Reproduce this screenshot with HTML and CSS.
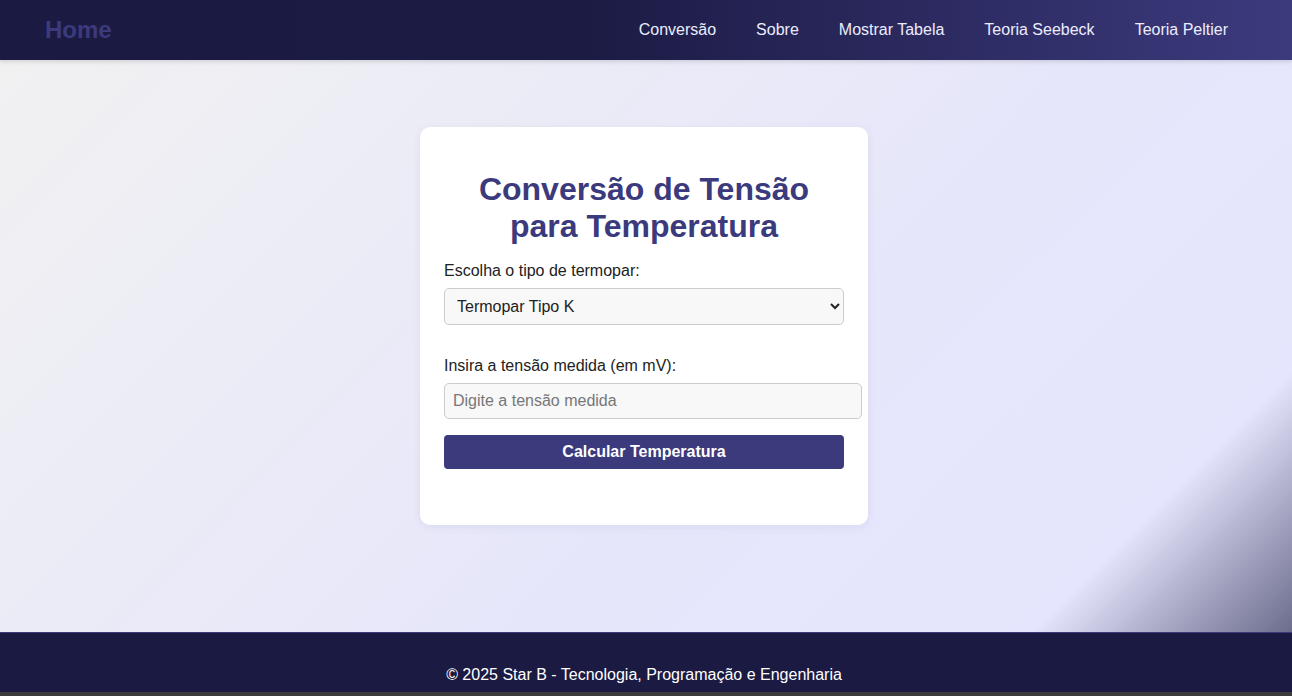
FILE: index.html
```html
<!DOCTYPE html>
<html lang="pt-BR">
<head>
<meta charset="UTF-8">
<title>Conversão de Tensão para Temperatura</title>
<link rel="stylesheet" href="styles.css">
</head>
<body>
<header class="topbar">
  <a class="brand" href="#">Home</a>
  <nav class="nav">
    <a href="#">Conversão</a>
    <a href="#">Sobre</a>
    <a href="#">Mostrar Tabela</a>
    <a href="#">Teoria Seebeck</a>
    <a href="#">Teoria Peltier</a>
  </nav>
</header>
<main class="main">
  <section class="card">
    <h1 class="title">Conversão de Tensão para Temperatura</h1>
    <form class="form">
      <label class="label" for="tipo">Escolha o tipo de termopar:</label>
      <select id="tipo" class="select">
        <option>Termopar Tipo K</option>
        <option>Termopar Tipo J</option>
        <option>Termopar Tipo T</option>
      </select>
      <label class="label label-gap" for="tensao">Insira a tensão medida (em mV):</label>
      <input id="tensao" class="input" type="text" placeholder="Digite a tensão medida">
      <button type="button" class="btn">Calcular Temperatura</button>
    </form>
  </section>
</main>
<footer class="footer">
  <p>© 2025 Star B - Tecnologia, Programação e Engenharia</p>
</footer>
</body>
</html>
```
FILE: styles.css
```css
html {
  background: #3b3b3b;
}
body {
  margin: 0;
  height: 692px;
  display: flex;
  flex-direction: column;
  font-family: "Liberation Sans", Arial, sans-serif;
  color: #222;
}
.topbar {
  height: 60px;
  flex: none;
  display: flex;
  align-items: center;
  justify-content: space-between;
  padding: 0 44px 0 45px;
  background: linear-gradient(90deg, #1b1a42 0%, #1c1b44 45%, #3c3a7d 100%);
  box-shadow: 0 2px 4px rgba(0, 0, 0, 0.12);
  position: relative;
  z-index: 1;
}
.brand {
  font-size: 24px;
  font-weight: bold;
  color: #3b3a7c;
  text-decoration: none;
}
.nav {
  display: flex;
}
.nav a {
  color: #ececff;
  text-decoration: none;
  font-size: 16px;
  padding: 0 20px;
}
.main {
  flex: 1;
  display: flex;
  justify-content: center;
  align-items: flex-start;
  padding: 67px 4px 0 0;
  background: linear-gradient(135deg, #f1f1f2 0%, #e6e6fb 60%, #e5e5fd 86%, #b0b0cc 92%, #6c6c8d 100%);
}
.card {
  width: 400px;
  background: #fff;
  border-radius: 10px;
  padding: 44px 24px 56px;
  box-shadow: 0 2px 8px rgba(60, 58, 124, 0.08);
}
.title {
  margin: 0 0 16px;
  text-align: center;
  color: #3b3a7c;
  font-size: 32px;
  line-height: 37px;
  font-weight: bold;
}
.form {
  display: flex;
  flex-direction: column;
  align-items: flex-start;
}
.label {
  font-size: 16px;
  line-height: 20px;
  color: #222;
  margin-bottom: 7px;
}
.label-gap {
  margin-top: 31px;
}
.select {
  width: 400px;
  height: 37px;
  box-sizing: border-box;
  font-family: inherit;
  font-size: 16px;
  color: #222;
  padding: 0 8px;
  border: 1px solid #ccc;
  border-radius: 5px;
  background: #f8f8f8;
}
.input {
  width: 400px;
  height: 18px;
  font-family: inherit;
  font-size: 16px;
  padding: 8px;
  border: 1px solid #ccc;
  border-radius: 5px;
  background: #f8f8f8;
  color: #222;
}
.input::placeholder {
  color: #777;
}
.btn {
  margin-top: 16px;
  width: 400px;
  height: 34px;
  border: none;
  border-radius: 4px;
  background: #3b3a7c;
  color: #fff;
  font-family: inherit;
  font-size: 16px;
  font-weight: bold;
}
.footer {
  height: 59px;
  flex: none;
  background: #1b1a42;
  border-top: 1px solid #3b3a7c;
  color: #fff;
  text-align: center;
  display: flex;
  align-items: flex-end;
  justify-content: center;
  padding-right: 4px;
}
.footer p {
  margin: 0 0 8px;
  font-size: 16px;
}
```
